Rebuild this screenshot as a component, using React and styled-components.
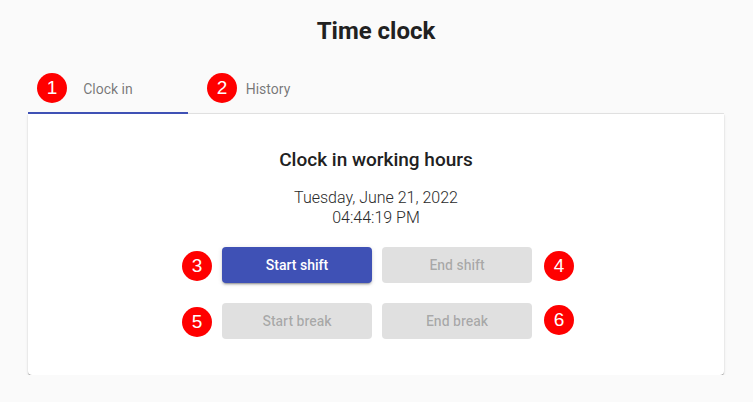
import React from "react";
import styled, { createGlobalStyle } from "styled-components";

const GlobalStyle = createGlobalStyle`
  html, body {
    margin: 0;
    padding: 0;
    background: #fafafa;
  }
  body {
    font-family: Roboto, "Noto Sans", sans-serif;
    color: rgba(0, 0, 0, 0.87);
  }
`;

const Page = styled.div`
  padding: 15px 29px 0 28px;
  width: 753px;
  box-sizing: border-box;
`;

const Title = styled.h1`
  margin: 0 0 18px;
  font-size: 24px;
  line-height: 32px;
  font-weight: 700;
  text-align: center;
  color: #212121;
`;

const TabBar = styled.div`
  display: flex;
  height: 48px;
  border-bottom: 1px solid #e4e4e4;
`;

const Tab = styled.div`
  position: relative;
  width: 160px;
  display: flex;
  align-items: center;
  justify-content: center;
  font-size: 14px;
  color: rgba(0, 0, 0, 0.54);
  box-sizing: border-box;
  margin-bottom: -1px;
  border-bottom: 2px solid ${(p) => (p.$active ? "#3f51b5" : "transparent")};
`;

const Badge = styled.span`
  position: absolute;
  top: ${(p) => p.$top}px;
  ${(p) => (p.$right !== undefined ? `right: ${p.$right}px;` : `left: ${p.$left}px;`)}
  width: 30px;
  height: 30px;
  border-radius: 50%;
  background: #ff0000;
  color: #fff;
  font-family: "Liberation Sans", Arial, sans-serif;
  font-size: 19px;
  line-height: 30px;
  text-align: center;
`;

const Card = styled.div`
  background: #fff;
  border-radius: 0 0 4px 4px;
  box-shadow: 0 2px 1px -1px rgba(0, 0, 0, 0.3), 0 1px 1px 0 rgba(0, 0, 0, 0.22),
    0 1px 3px 0 rgba(0, 0, 0, 0.12);
  padding: 30px 0 36px;
  display: flex;
  flex-direction: column;
  align-items: center;
`;

const Heading = styled.h2`
  margin: 0 0 12px;
  font-size: 19px;
  line-height: 32px;
  font-weight: 500;
  color: #212121;
`;

const DateText = styled.div`
  font-size: 16px;
  line-height: 20px;
  font-weight: 300;
  color: #2a2a2a;
  text-align: center;
  margin-bottom: 19px;
`;

const ButtonRow = styled.div`
  position: relative;
  display: flex;
  gap: 10px;
  margin-left: 2px;
  & + & {
    margin-top: 20px;
  }
`;

const Button = styled.button`
  width: 150px;
  height: 36px;
  border: none;
  border-radius: 4px;
  font-family: Roboto, sans-serif;
  font-size: 14px;
  font-weight: 500;
  cursor: ${(p) => (p.disabled ? "default" : "pointer")};
  background: ${(p) => (p.disabled ? "#e0e0e0" : "#3f51b5")};
  color: ${(p) => (p.disabled ? "rgba(0, 0, 0, 0.26)" : "#fff")};
  box-shadow: ${(p) =>
    p.disabled
      ? "none"
      : "0 3px 1px -2px rgba(0,0,0,0.2), 0 2px 2px 0 rgba(0,0,0,0.14), 0 1px 5px 0 rgba(0,0,0,0.12)"};
`;

export default function App() {
  return (
    <>
      <GlobalStyle />
      <Page>
        <Title>Time clock</Title>
        <TabBar>
          <Tab $active>
            <Badge $left={9} $top={8}>1</Badge>
            Clock in
          </Tab>
          <Tab>
            <Badge $left={19} $top={8}>2</Badge>
            History
          </Tab>
        </TabBar>
        <Card>
          <Heading>Clock in working hours</Heading>
          <DateText>
            Tuesday, June 21, 2022
            <br />
            04:44:19 PM
          </DateText>
          <ButtonRow>
            <Badge $left={-40} $top={4}>3</Badge>
            <Button>Start shift</Button>
            <Button disabled>End shift</Button>
            <Badge $right={-42} $top={4}>4</Badge>
          </ButtonRow>
          <ButtonRow>
            <Badge $left={-40} $top={4}>5</Badge>
            <Button disabled>Start break</Button>
            <Button disabled>End break</Button>
            <Badge $right={-42} $top={2}>6</Badge>
          </ButtonRow>
        </Card>
      </Page>
    </>
  );
}
